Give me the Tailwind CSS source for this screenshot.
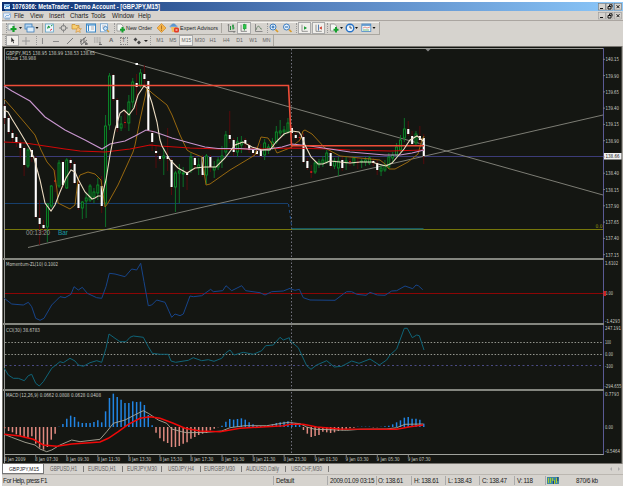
<!DOCTYPE html>
<html lang="en">
<head>
  <meta charset="UTF-8" />
  <meta name="viewport" content="width=device-width, initial-scale=1.0"/>
  <title>MetaTrader - GBPJPY,M15</title>
  <script src="https://cdn.jsdelivr.net/npm/@tailwindcss/browser@4"></script>
</head>
<body class="bg-white w-[625px] h-[486px] overflow-hidden font-['Liberation_Sans',sans-serif] text-[6.2px] leading-[9px] text-[#222] whitespace-nowrap">
  <div class="ml-[2px] mt-[2px] w-[621px] h-[484px] bg-[#d6d3ce] flex flex-col">

    <!-- Title bar -->
    <div class="h-[9px] shrink-0 flex items-center bg-linear-to-r from-[#0d2f70] via-[#5580bd] to-[#8cc8fa]">
      <svg class="w-[8px] h-[8px] ml-[1px]" viewBox="0 0 8 8"><rect x="1" y="1" width="6" height="5" fill="#dbe8f5"/><path d="M1 2h6M2 5l2-2 1 1 2-2M2 7h5" stroke="#3d8bd0" fill="none"/></svg>
      <svg class="ml-[1px] w-[156px] h-[9px] font-bold text-[6.4px] overflow-visible" viewBox="0 0 156 9"><text x="0" y="6.800" fill="#fff" textLength="148" lengthAdjust="spacingAndGlyphs">1076366: MetaTrader - Demo Account - [GBPJPY,M15]</text></svg>
      <svg class="ml-auto mr-[1px] w-[24px] h-[8px]" viewBox="0 0 24 8"><g fill="#d6d3ce" stroke="#777" stroke-width=".6"><rect x=".5" y=".5" width="7" height="6.5"/><rect x="8" y=".5" width="7" height="6.5"/><rect x="16.500" y=".5" width="7" height="6.500"/></g><path d="M2 5.500h3M10 3.500h3v2.500h-3zM11.500 3V1.800h2.500v2.500M18.500 2.200l3 3M21.500 2.200l-3 3" stroke="#111" fill="none"/></svg>
    </div>

    <!-- Menu -->
    <div class="h-[9px] shrink-0 flex items-center text-[6.3px] tracking-[-0.05px]">
      <svg class="w-[8px] h-[8px] ml-[1px]" viewBox="0 0 8 8"><rect x=".5" y="1" width="7" height="5" rx="1" fill="#e8f0fa" stroke="#88aedc" stroke-width=".8"/><path d="M2 5l2-2 1 1 2-2M2 7h5" stroke="#5d9bd8" stroke-width=".7" fill="none"/></svg>
      <span class="ml-[3px] w-[16px]">File</span>
      <span class="w-[19px]">View</span>
      <span class="w-[21px]">Insert</span>
      <span class="w-[21px]">Charts</span>
      <span class="w-[21px]">Tools</span>
      <span class="w-[26px]">Window</span>
      <span>Help</span>
      <svg class="ml-auto mr-[1px] w-[24px] h-[8px]" viewBox="0 0 24 8"><g fill="#d6d3ce" stroke="#999" stroke-width=".6"><rect x=".5" y=".5" width="7" height="6.5"/><rect x="8" y=".5" width="7" height="6.5"/><rect x="16.500" y=".5" width="7" height="6.500"/></g><path d="M2 5.500h3M10 3.500h3v2.500h-3zM11.500 3V1.800h2.500v2.500M18.500 2.200l3 3M21.500 2.200l-3 3" stroke="#111" fill="none"/></svg>
    </div>

    <!-- Standard toolbar -->
    <div class="h-[15px] shrink-0 flex items-center border-t border-[#aaa5a0]">
      <div class="w-[378px] h-[13px] flex items-center border-r border-b border-[#aaa7a0] shadow-[inset_0_1px_0_#f4f2ee]">
        <div class="w-[5px] flex justify-end"><i class="w-px h-[10px] border-l border-dotted border-[#999]"></i></div>
        <svg class="w-[16px] h-[10px]" viewBox="0 0 16 10"><rect x="1" y="1" width="6" height="6" fill="#eef4ee" stroke="#789"  stroke-width=".7"/><path d="M6.500 3v6M3.500 6h6" stroke="#14a028" stroke-width="2.2"/><path d="M12 4h3l-1.500 2z" fill="#111"/></svg>
        <svg class="w-[16px] h-[10px]" viewBox="0 0 16 10"><rect x="2" y="1" width="7" height="5" fill="#b8d8f4" stroke="#3b7cb8" stroke-width=".8"/><rect x="4" y="4" width="7" height="5" fill="#e0effa" stroke="#3b7cb8" stroke-width=".8"/><path d="M12.500 4h3L14 6z" fill="#111"/></svg>
        <i class="w-[4px] h-[10px] border-r border-[#aaa7a0]"></i>
        <svg class="w-[13px] h-[10px]" viewBox="0 0 13 10"><rect x="2.500" y="1" width="8" height="8" fill="#eef6fb" stroke="#62a6ca" stroke-width=".8"/><path d="M4.500 5.500l1-2 1.500 1" stroke="#18943c" fill="none" stroke-width="1.200"/><path d="M7 7.500l2-1.500" stroke="#d34"/><path d="M8 3l1.500-1" stroke="#18943c"/></svg>
        <svg class="w-[14px] h-[10px]" viewBox="0 0 14 10"><circle cx="7.500" cy="5" r="2.500" fill="none" stroke="#777"/><path d="M7.500 0.500v3M7.500 6.500v3M3 5h3M9 5h3" stroke="#888"/></svg>
        <svg class="w-[14px] h-[10px]" viewBox="0 0 14 10"><path d="M2 1.500h3l1 1h3v3.500h-7z" fill="#f8cf72" stroke="#c98b28" stroke-width=".7"/><path d="M8 3.500l1 2 2.500.2-1.700 1.500.5 2.300L8 8.300 5.800 9.500l.5-2.300z" fill="#f9c987" stroke="#c98b28" stroke-width=".5"/></svg>
        <svg class="w-[14px] h-[10px]" viewBox="0 0 14 10"><rect x="2.500" y="1" width="9" height="8" fill="#f2f7fc" stroke="#3987c6"/><path d="M3 2h8M4.500 2v6" stroke="#3987c6"/><path d="M7 4h3M7 6h3" stroke="#888" stroke-width=".6"/></svg>
        <svg class="w-[14px] h-[10px]" viewBox="0 0 14 10"><rect x="2.500" y=".8" width="7" height="8" fill="#f6fafd" stroke="#6fa2cf" stroke-width=".8"/><path d="M4 3h4M4 5h3" stroke="#889" stroke-width=".6"/><circle cx="7.500" cy="5.500" r="2" fill="#c6e5fa" stroke="#3b78b8" stroke-width=".8"/><path d="M9 7l2 2" stroke="#d69a30" stroke-width="1.300"/></svg>
        <i class="w-[3px] h-[10px] border-r border-dotted border-[#999]"></i>
        <svg class="w-[11px] h-[10px]" viewBox="0 0 11 10"><path d="M2 1h4l2 2v5H2z" fill="#f5f8f5" stroke="#888" stroke-width=".7"/><path d="M7.500 4v5.500M5 6.800h5" stroke="#16a02e" stroke-width="2"/></svg>
        <svg class="w-[29px] h-[9px] overflow-visible" viewBox="0 0 29 9"><text x="0" y="6.800" fill="#222" textLength="26" lengthAdjust="spacingAndGlyphs">New Order</text></svg>
        <svg class="w-[14px] h-[10px]" viewBox="0 0 14 10"><path d="M6.500 .5L11 5 6.500 9.500 2 5z" fill="#f5b54c" stroke="#d08a28" stroke-width=".7"/><path d="M6.500 2.500v4M6.500 7v1" stroke="#a0651c" stroke-width=".8"/></svg>
        <svg class="w-[11px] h-[10px]" viewBox="0 0 11 10"><ellipse cx="4.500" cy="3.500" rx="4" ry="1.400" fill="#78a8d8"/><path d="M2 3q0-2.500 2.500-2.500T7 3z" fill="#5d95cd"/><path d="M2 4h5l-1 5H3z" fill="#f1bd62"/><rect x="5" y="4.500" width="5" height="5" rx="1.500" fill="#e33a24"/><path d="M6.500 7h2" stroke="#fff"/></svg>
        <svg class="w-[41px] h-[9px] overflow-visible" viewBox="0 0 41 9"><text x="0" y="6.800" fill="#222" textLength="38" lengthAdjust="spacingAndGlyphs">Expert Advisors</text></svg>
        <i class="w-[4px] h-[10px] border-l border-[#aaa7a0]"></i>
        <svg class="w-[12px] h-[10px]" viewBox="0 0 12 10"><path d="M3.500 1v7.500h7M2.500 2h2M9 8v2" stroke="#777" stroke-width=".8" fill="none"/><path d="M5.500 3v4M8 1.500v5M7 3h2M7.500 5h2" stroke="#188e34" stroke-width="1.100"/></svg>
        <svg class="w-[14px] h-[12px] bg-[#f1efeb] border border-[#aaa]" viewBox="0 0 14 12"><path d="M3.500 2v8h7" stroke="#777" fill="none"/><path d="M7.500 1v8" stroke="#188e34"/><rect x="6" y="2" width="3.500" height="5" fill="#2bc746" stroke="#188e34" stroke-width=".6"/></svg>
        <svg class="w-[14px] h-[10px]" viewBox="0 0 14 10"><path d="M4.500 1v7.500h7" stroke="#777" stroke-width=".8" fill="none"/><path d="M5 7q2-6 3.500-3T11 6" stroke="#5f7d62" fill="none" stroke-width=".8"/></svg>
        <i class="w-[3px] h-[10px] border-r border-dotted border-[#999]"></i>
        <svg class="w-[14px] h-[10px]" viewBox="0 0 14 10"><circle cx="5" cy="4" r="3" fill="#e3f2ff" stroke="#3d7cc0"/><path d="M3.500 4h3M5 2.500v3" stroke="#1b60aa"/><path d="M7.500 6.500L10 9" stroke="#d99b2c" stroke-width="1.700"/></svg>
        <svg class="w-[12px] h-[10px]" viewBox="0 0 12 10"><circle cx="4.500" cy="4" r="3" fill="#e3f2ff" stroke="#3d7cc0"/><path d="M3 4h3" stroke="#1b60aa"/><path d="M7 6.500L9.500 9" stroke="#d99b2c" stroke-width="1.700"/></svg>
        <i class="w-[3px] h-[10px] border-r border-dotted border-[#999]"></i>
        <svg class="w-[13px] h-[12px] ml-[1px] bg-[#f1efeb] border border-[#aaa]" viewBox="0 0 13 12"><path d="M3.500 2v8h7" stroke="#777" fill="none" stroke-width=".9"/><path d="M6 4l3.500 2L6 8z" fill="#15962e"/></svg>
        <svg class="w-[13px] h-[12px] ml-[1px] bg-[#f1efeb] border border-[#aaa]" viewBox="0 0 13 12"><path d="M3.500 2v8h7" stroke="#777" fill="none" stroke-width=".9"/><path d="M6.500 2v7" stroke="#36a"/><path d="M10.500 4L7.500 6l3 2z" fill="#c32"/></svg>
        <i class="w-[3px] h-[10px] border-r border-dotted border-[#999]"></i>
        <svg class="w-[17px] h-[10px]" viewBox="0 0 17 10"><path d="M2.500 1h4l2 2v5h-6z" fill="#f5f8f5" stroke="#888" stroke-width=".7"/><path d="M8 4v5.500M5.500 6.800h5" stroke="#16a02e" stroke-width="2"/><path d="M12 4h3l-1.500 2z" fill="#111"/></svg>
        <svg class="w-[16px] h-[10px]" viewBox="0 0 16 10"><circle cx="5" cy="5" r="3.800" fill="#eef7ff" stroke="#2572c8" stroke-width="1.400"/><path d="M5 2.500V5h2" stroke="#234" fill="none" stroke-width=".8"/><path d="M10 4h3l-1.500 2z" fill="#111"/></svg>
        <svg class="w-[16px] h-[10px]" viewBox="0 0 16 10"><rect x=".8" y="1" width="9" height="7.500" fill="#f2f8fd" stroke="#4989c4" stroke-width=".8"/><path d="M1 2h9" stroke="#4989c4" stroke-width="1.500"/><path d="M2 5l2-1 2 1 3-1" stroke="#d65" fill="none" stroke-width=".7"/><path d="M2 7h6" stroke="#4a4" stroke-width=".7"/><path d="M11.500 4h3L13 6z" fill="#111"/></svg>
      </div>
    </div>

    <!-- Drawing tools and timeframes -->
    <div class="h-[11px] shrink-0 flex items-center text-[5.2px] text-[#666]">
      <div class="w-[272px] h-[11px] flex items-center border-r border-[#aaa7a0]">
        <i class="w-[4px] h-[9px] border-r border-dotted border-[#999]"></i>
        <svg class="w-[13px] h-[11px] bg-[#f1efeb] border border-[#aaa]" viewBox="0 0 13 11"><path d="M5 1.500v6l1.500-1.300L7.500 9l1-.5-1-2.500H9z" fill="#333"/></svg>
        <svg class="w-[14px] h-[10px]" viewBox="0 0 14 10"><path d="M7 1v8M3 5h8" stroke="#999"/></svg>
        <i class="w-[4px] h-[9px] border-r border-dotted border-[#999]"></i>
        <svg class="w-[13px] h-[10px]" viewBox="0 0 13 10"><path d="M5.500 2v6" stroke="#888"/></svg>
        <svg class="w-[14px] h-[10px]" viewBox="0 0 14 10"><path d="M3 5.500h6" stroke="#888"/></svg>
        <svg class="w-[13px] h-[10px]" viewBox="0 0 13 10"><path d="M3 8l6-6" stroke="#777"/></svg>
        <svg class="w-[14px] h-[10px]" viewBox="0 0 14 10"><path d="M3 6l6-5M4 9l6-5M4 3v5M7 2v5" stroke="#555" stroke-width=".8"/><path d="M9 6v3M8 8h3" stroke="#555"/></svg>
        <svg class="w-[14px] h-[10px]" viewBox="0 0 14 10"><path d="M3 2h7M3 4h7M3 6h7" stroke="#888" stroke-width=".8" stroke-dasharray="1 .6"/><path d="M9 6v3M8 8.500h3" stroke="#555" stroke-width=".8"/></svg>
        <span class="w-[13px] text-center font-bold text-[6px]">A</span>
        <span class="w-[8px] h-[8px] ml-[2px] flex items-center justify-center border border-dotted border-[#888] text-[6px]">T</span>
        <svg class="w-[23px] h-[10px]" viewBox="0 0 23 10"><path d="M7.500 1.500l2 2-2 2-2-2z" fill="#444"/><path d="M11 4.500l2 2-2 2-2-2z" fill="#444"/><path d="M16 4h4l-2 2z" fill="#222"/></svg>
        <i class="w-[3px] h-[9px] border-l border-dotted border-[#999]"></i>
        <span class="w-[13px] text-center">M1</span>
        <span class="w-[13px] text-center">M5</span>
        <span class="w-[14px] h-[11px] text-center bg-[#f1efeb] border border-[#aaa] text-[5px]">M15</span>
        <span class="w-[13px] text-center">M30</span>
        <span class="w-[13px] text-center">H1</span>
        <span class="w-[14px] text-center">H4</span>
        <span class="w-[13px] text-center">D1</span>
        <span class="w-[14px] text-center">W1</span>
        <span class="w-[13px] text-center">MN</span>
      </div>
    </div>

    <!-- Chart window -->
    <svg id="chart" class="w-[621px] h-[418px] shrink-0 font-['DejaVu_Sans_Condensed','DejaVu_Sans',sans-serif]" viewBox="2 46 621 418" fill="none">
      <rect x="2" y="46" width="621" height="418" fill="#d6d3ce"/>
      <rect x="2.500" y="46.500" width="619.500" height="417" fill="#141612" stroke="#77746f"/>
      <path d="M4.500 463V48.500H603" stroke="#9a9a96"/>
      <path d="M603.500 48V455" stroke="#5a5a94"/>
      <g stroke="#84867f" stroke-width="2">
        <path d="M3 259H604M3 324H604M3 390H604"/>
      </g>
      <path d="M4 454.500H603.500" stroke="#a0a29c"/>

      <!-- Levels -->
      <path d="M291.500 49V454" stroke="#73737e" stroke-dasharray="1.500 2"/>
      <path d="M5 156.500H603" stroke="#3c3c78"/>
      <path d="M5 203.500H288" stroke="#173f6c"/>
      <path d="M288.500 204L292 229" stroke="#1c4d8a" stroke-dasharray="3 3"/>
      <path d="M5 229.500H603" stroke="#77770a"/>
      <path d="M292 228.800H423.500" stroke="#146b7b" stroke-width="1.200"/>
      <path d="M5 293.500H603" stroke="#8c0505"/>
      <path d="M5 342.500H603M5 354.500H603" stroke="#94968e" stroke-dasharray="1.500 1.700"/>
      <path d="M5 365.500H603" stroke="#4a4a84" stroke-dasharray="2 2.500"/>

      <!-- Trend lines -->
      <path d="M85 49.500L603 195M28 247.500L603 115" stroke="#88887f" stroke-width=".9"/>
      <rect x="135.500" y="63" width="2.500" height="2" fill="#fff"/>
      <path d="M425.500 49h5l-2.500 2.500z" fill="#888"/>

      <g id="candles"></g>
      <g id="macd"></g>

      <!-- Moving averages -->
      <polyline points="4,99 13,109 25,123 35,135 41,150 47,162 54,170 57,190 58,203 70,209 75,205 78,180 80,175 88,172 95,174 101,180 105,207 108,203 118,185 133,152 135,145 140,120 147,88 152,93 157,97 167,105 172,115 180,135 187,150 190,152 202,157 206,185 210,184 230,170 255,155 261,137 268,138 274,147 277,153 290,148 300,140 303,131 305,130 312,134 325,148 340,156 360,158 380,160 385,164 389,169 395,169 408,162 418,154 422,140 424,136" stroke="#97680f"/>
      <polyline points="4,142 25,143 65,149 80,151 105,152 130,149 150,145 160,146 190,148 220,149 262,149 290,148 330,149 350,150 390,151 424,150" stroke="#d00808" stroke-width="1.200"/>
      <polyline points="4,86 12,91 30,101 45,117 65,130 85,140 102,149 110,144 125,141 135,136 146,130 155,132 172,138 190,143 205,147 218,148.500 240,148.500 262,150 282,147 292,144 310,146 330,149 350,152 385,155 400,155 412,153 424,150" stroke="#c896ce" stroke-width="1.100"/>
      <polyline points="4,85.500 288.500,85.500 291.500,145.700 424,145.700" stroke="#ee4d38" stroke-width="1.600"/>
      <polyline points="4,110 8,112 12,119 20,132 30,149 34,158 40,180 45,203 51,211 55,205 60,192 66,178 71,170 75,172 78,179 85,192 92,199 95,198 98,196 102,196 106,180 110,155 115,130 120,113 124,110 129,115 134,108 138,95 144,86 147,88 152,103 157,122 160,140 162,146 170,160 178,168 187,173 195,168 205,167 216,167 225,158 235,145 243,142 252,147 262,150 270,150 276,142 284,134 292,131 299,132 301,135 305,145 311,157 318,164 323,164 330,161 340,162 350,163 360,162 372,162 378,164 386,166 392,163 398,156 404,149 410,140 417,136 420,138 424,142" stroke="#ecdcc2" stroke-width="1.100"/>

      <g id="indicators"></g>

      <!-- Labels -->
      <g id="labels" font-size="5.500" fill="#cdcfc8"></g>
      <rect x="604" y="153" width="17.500" height="6.500" fill="#f2f2f2"/>
      <text x="605.500" y="158.300" font-size="5.500" fill="#111" textLength="14" lengthAdjust="spacingAndGlyphs">138.66</text>
      <rect x="603.500" y="291" width="2.500" height="5" fill="#c22"/>
      <g font-size="7" class="font-['Liberation_Sans',sans-serif]">
        <text x="26" y="235" fill="#9a9c96" textLength="24" lengthAdjust="spacingAndGlyphs">00:13:20</text>
        <text x="58" y="235" fill="#189aa2" textLength="10" lengthAdjust="spacingAndGlyphs">Bar</text>
      </g>
      <text x="595.500" y="228" font-size="5.200" fill="#9a9a10" textLength="7" lengthAdjust="spacingAndGlyphs">0.0</text>
    </svg>

    <!-- Chart tabs -->
    <div class="h-[10px] shrink-0 flex items-center text-[#666]">
      <div class="w-[42px] h-[10px] bg-white text-[#111] border border-t-0 border-[#777]"><svg class="w-[40px] h-[9px] overflow-visible" viewBox="0 0 40 9"><text x="6" y="6.500" fill="#222" textLength="30" lengthAdjust="spacingAndGlyphs">GBPJPY,M15</text></svg></div>
      <svg class="w-[300px] h-[10px] text-[6.400px]" viewBox="44 0 300 10" fill="#5c5c5c">
        <text x="50" y="7" textLength="27" lengthAdjust="spacingAndGlyphs">GBPUSD,H1</text>
        <text x="88" y="7" textLength="28" lengthAdjust="spacingAndGlyphs">EURUSD,H1</text>
        <text x="127" y="7" textLength="30" lengthAdjust="spacingAndGlyphs">EURJPY,M30</text>
        <text x="168" y="7" textLength="26" lengthAdjust="spacingAndGlyphs">USDJPY,H4</text>
        <text x="204" y="7" textLength="31" lengthAdjust="spacingAndGlyphs">EURGBP,M30</text>
        <text x="246" y="7" textLength="33" lengthAdjust="spacingAndGlyphs">AUDUSD,Daily</text>
        <text x="291" y="7" textLength="31" lengthAdjust="spacingAndGlyphs">USDCHF,M30</text>
        <path d="M83.500 2v6M122.500 2v6M161.500 2v6M200.500 2v6M241.500 2v6M285.500 2v6M328.500 2v6" stroke="#666" stroke-width=".8"/>
      </svg>
      <svg class="ml-auto mr-[2px] w-[12px] h-[8px]" viewBox="0 0 12 8" fill="#aaa"><path d="M3 2v4L1 4zM9 2v4l2-2z"/></svg>
    </div>

    <!-- Status bar -->
    <div class="h-[12px] shrink-0 flex items-center border-t border-[#bbb7b1] text-[#222] text-[6.3px] tracking-[-0.3px]">
      <span class="w-[271px] pl-px tracking-[-0.45px]">For Help, press F1</span>
      <span class="w-[54px] h-[9px] pl-[2px] border-l border-[#aaa]">Default</span>
      <span class="w-[49px] h-[9px] pl-[2px] border-l border-[#aaa]">2009.01.09 03:15</span>
      <span class="w-[35px] h-[9px] pl-[1px] border-l border-[#aaa]">O: 138.61</span>
      <span class="w-[34px] h-[9px] pl-[2px] border-l border-[#aaa]">H: 138.61</span>
      <span class="w-[34px] h-[9px] pl-[2px] border-l border-[#aaa]">L: 138.43</span>
      <span class="w-[35px] h-[9px] pl-[2px] border-l border-[#aaa]">C: 138.47</span>
      <span class="w-[31px] h-[9px] pl-[2px] border-l border-[#aaa]">V: 118</span>
      <div class="w-[31px] h-[9px] pl-[1px] flex items-center border-l border-[#aaa]">
        <svg class="w-[12px] h-[7px]" viewBox="0 0 12 7"><rect width="12" height="7" fill="#3f88a0"/><path d="M1.500 1v5M3.500 1v5M5.500 1v3M7.500 3v4M9.500 1v5" stroke="#a6c92c"/><path d="M6.500 4v3M10.800 0v4" stroke="#16407c"/></svg>
      </div>
      <span>870/6 kb</span>
    </div>
  </div>

  <script>
    const NS = 'http://www.w3.org/2000/svg';
    const add = (parent, tag, attrs, text) => {
      const el = document.createElementNS(NS, tag);
      for (const k in attrs) el.setAttribute(k, attrs[k]);
      if (text) el.textContent = text;
      document.getElementById(parent).appendChild(el);
    };
    const barX = (i) => 4.7 + 3.88 * i;

    // type, high, body top, body bottom, low
    const candles = [
      'w 104 106 118 124', 'w 116 118 132 134', 'w 130 133 138 143', 'w 134 137 142 147', 'w 140 143 148 158',
      'w 146 148 165 176', 'g 148 150 166 168', 'w 148 150 157 162', 'w 156 158 217 218', 'w 200 218 224 245',
      'w 220 225 228 234', 'g 203 204 227 242', 'g 185 186 206 208', 'r 170 180 182 192', 'g 160 163 186 188',
      'w 161 162 185 188', 'g 158 160 188 189', 'w 158 160 163 168', 'w 162 164 183 184', 'w 180 184 208 210',
      'g 201 202 208 219', 'g 193 198 201 218', 'g 184 186 200 202', 'g 188 192 197 203', 'g 178 185 193 200',
      'w 176 186 206 213', 'g 115 126 203 227', 'g 73 76 125 130', 'w 74 75 99 101', 'w 98 100 128 132',
      'g 116 124 128 131', 'r 110 122 123 128', 'g 95 102 123 131', 'g 78 82 102 108', 'w 74 83 87 115',
      'g 69 73 86 88', 'w 65 74 79 88', 'w 80 81 130 132', 'w 130 133 142 151', 'w 146 151 153 168',
      'w 154 156 159 161', 'g 148 156 158 175', 'w 128 156 159 171', 'w 158 160 187 195', 'g 171 173 187 212',
      'g 164 171 173 203', 'g 167 173 174 187', 'w 170 172 175 190', 'g 153 157 170 173', 'w 156 158 165 170',
      'g 158 165 168 175', 'w 155 157 175 177', 'g 154 156 175 184', 'w 155 157 167 172', 'g 161 167 170 178',
      'g 157 160 167 170', 'g 146 156 160 168', 'g 131 135 152 156', 'w 111 135 139 143', 'w 138 140 152 156',
      'g 137 142 152 157', 'g 136 142 145 153', 'w 138 140 143 148', 'w 143 145 150 153', 'w 147 150 153 156',
      'w 146 151 154 156', 'w 144 150 156 158', 'g 139 143 155 160', 'g 144 147 150 154', 'g 138 142 148 150',
      'g 126 132 142 144', 'g 120 131 133 136', 'g 126 130 132 136', 'g 118 123 132 134', 'w 125 128 133 138',
      'w 132 135 138 140', 'r 133 137 138 142', 'w 133 137 162 163', 'w 158 161 168 170', 'r 165 171 173 178',
      'g 161 163 172 174', 'g 159 162 165 168', 'g 156 160 163 167', 'g 150 153 162 164', 'w 151 153 166 168',
      'g 158 161 166 169', 'g 157 161 168 176', 'w 157 160 168 171', 'g 157 161 163 170', 'r 158 161 162 166',
      'g 156 158 163 166', 'r 158 162 163 169', 'g 159 161 162 168', 'g 157 160 162 166', 'g 156 158 163 165',
      'w 158 161 163 166', 'w 160 163 170 175', 'g 164 168 171 176', 'g 160 165 170 172', 'g 153 157 167 169',
      'g 152 155 158 163', 'g 143 147 155 157', 'g 135 140 150 152', 'g 118 129 138 142', 'w 121 129 134 136',
      'w 131 136 144 146', 'g 131 134 143 146', 'w 126 136 140 145', 'w 134 138 156 164'
    ];
    candles.forEach((row, i) => {
      const [type, high, top, bottom, low] = row.split(' ');
      const x = barX(i);
      const wick = type === 'g' ? '#0b7a2a' : '#5c0a0c';
      add('candles', 'path', { d: `M${x} ${high}V${low}`, stroke: wick, 'stroke-width': 0.9 });
      if (type === 'w') add('candles', 'rect', { x: x - 1, y: top, width: 2.1, height: bottom - top, fill: '#fff' });
      if (type === 'g') add('candles', 'rect', { x: x - 1, y: top, width: 2, height: bottom - top, fill: '#08280f', stroke: '#0c9a2c', 'stroke-width': 0.8 });
      if (type === 'r') add('candles', 'rect', { x: x - 1, y: top, width: 2, height: bottom - top, fill: '#c01818' });
    });

    // MACD histogram, in thirds of a pixel from the zero line
    const macd = [-4, -12, -16, -22, -26, -30, -32, -28, -50, -62, -68, -60, -38, -20, 1, 9, 25, 34, 30, 16, 12, 12, 12, 15, 20, 14,
      47, 87, 100, 90, 82, 72, 72, 77, 75, 76, 66, 36, 5, -17, -34, -43, -48, -60, -60, -57, -50, -46, -35, -30, -24, -20, -18,
      -10, -5, -1, 4, 16, 24, 22, 24, 26, 22, 14, 8, 3, 3, 3, 5, 8, 12, 14, 16, 17, 14, 12, 8, -9, -20, -30, -27, -24, -14, -16,
      -18, -16, -12, -10, -7, -4, -2, 1, 1, 1, 1, -1, -1, 1, 2, 4, 8, 14, 20, 28, 30, 25, 25, 22, 10];
    macd.forEach((v, i) => {
      add('macd', 'path', { d: `M${barX(i)} 427V${427 - v / 3}`, stroke: v > 0 ? '#2184e2' : '#e08a80', 'stroke-width': 1.5 });
    });

    // Indicator curves: left part and right part share a scale of 3 and differ in origin
    const curve = (left, right, stroke, width) => {
      const conv = (s, ox) => s.split(' ').map((p) => {
        const [x, y] = p.split(',');
        return `${(ox + x / 3).toFixed(1)},${(255 + y / 3).toFixed(1)}`;
      });
      add('indicators', 'polyline', { points: [...conv(left, 0), ...conv(right, 290)].join(' '), stroke, 'stroke-width': width });
    };
    curve('13,130 35,147 70,150 85,142 95,155 107,190 120,196 132,190 155,150 180,125 195,128 213,118 222,95 235,105 247,97 262,115 290,128 305,130 318,95 328,55 345,57 375,65 395,42 410,45 422,25 432,80 445,152 455,150 470,135 495,142 515,187 525,177 540,182 550,177 570,123 580,125 605,122 632,103 640,110 668,107 678,92 695,107 725,92 737,107 780,113 795,120 815,110 850,108 870,100',
      '0,101 15,106 28,103 40,128 60,135 135,136 160,117 170,110 185,110 200,118 228,121 240,112 262,120 285,121 305,108 320,107 345,93 368,101 378,90 385,92 398,104', '#174489', 1);
    curve('13,340 25,360 40,370 55,370 73,377 85,362 95,358 107,385 118,393 130,380 155,340 180,320 190,323 210,310 225,318 235,330 250,334 270,323 290,317 305,322 318,280 327,237 345,250 360,260 378,260 390,247 400,243 430,247 445,275 457,295 480,298 505,298 513,318 527,322 565,316 580,308 605,317 625,314 642,319 665,310 678,293 690,285 702,300 730,292 760,298 785,287 797,272 820,270 840,247 850,255 868,248',
      '0,257 25,278 35,300 50,332 63,343 80,330 110,317 133,336 155,334 185,318 207,325 240,312 268,330 290,315 300,300 320,282 343,220 352,220 367,248 380,240 388,242 402,285', '#0f6478', 1);
    curve('13,538 35,547 75,562 105,570 120,582 140,590 155,585 180,570 215,555 240,560 300,553 320,530 340,505 375,495 400,482 430,467 445,475 475,495 500,505 515,522 545,530 560,533 620,532 665,528 690,518 735,512 800,512 845,505 868,502',
      '0,503 30,506 50,516 75,523 120,524 170,526 210,523 290,522 320,518 345,508 400,507', '#aaa898', 0.9);
    curve('13,538 60,543 100,553 130,570 170,574 215,567 300,561 325,550 355,530 385,508 420,490 450,485 480,490 520,505 555,520 600,528 660,530 720,520 800,515 850,512',
      '0,508 40,508 80,516 150,522 320,523 360,515 400,510', '#f00808', 1.5);

    const label = (text, x, y, w) => add('labels', 'text', { x, y, textLength: w, lengthAdjust: 'spacingAndGlyphs' }, text);
    label('GBPJPY,M15  138.95 138.99 138.53 138.65', 6, 54.5, 89);
    label('HiLow 138.988', 6, 60, 30);
    label('Momentum-ZL(10) 0.1002', 6, 266, 52);
    label('CCI(30) 38.6783', 6, 331.5, 34);
    label('MACD  (12,26,9) 0.0662 0.0808 0.0628 0.0408', 6, 397, 95);

    ['140.15', '139.90', '139.65', '139.40', '139.15', '138.90', '', '138.40', '138.15', '137.90', '137.65', '137.40', '137.15']
      .forEach((p, i) => {
        const y = 59.3 + 16.28 * i;
        if (p) label(p, 605.5, y + 2, 13.5);
        add('chart', 'path', { d: `M603 ${y}h2`, stroke: '#8a8a90', 'stroke-width': 0.8 });
      });
    [['1.6102', 264.5, 13], ['0.00', 295.300, 8], ['-1.4293', 322.500, 15], ['247.191', 330, 16], ['100', 344.300, 6], ['0.00', 356, 8],
      ['-100', 367.500, 8], ['-294.655', 388, 17], ['0.7793', 395.500, 14], ['0.00', 428.500, 8], ['-0.5464', 453, 15]]
      .forEach(([t, y, w]) => label(t, t === '-294.655' ? 604.5 : 605, y, w));

    ['8 Jan 2009', '8 Jan 07:30', '8 Jan 09:30', '8 Jan 11:30', '8 Jan 13:30', '8 Jan 15:30', '8 Jan 17:30', '8 Jan 19:30',
      '8 Jan 21:30', '8 Jan 23:30', '9 Jan 01:30', '9 Jan 03:30', '9 Jan 05:30', '9 Jan 07:30'].forEach((t, i) => {
        const x = 4 + 31.05 * i;
        label(t, x, 461, i ? 23 : 21.5);
        add('chart', 'path', { d: `M${x + 0.7} 454v3`, stroke: '#999', 'stroke-width': 0.8 });
      });
  </script>
</body>
</html>
